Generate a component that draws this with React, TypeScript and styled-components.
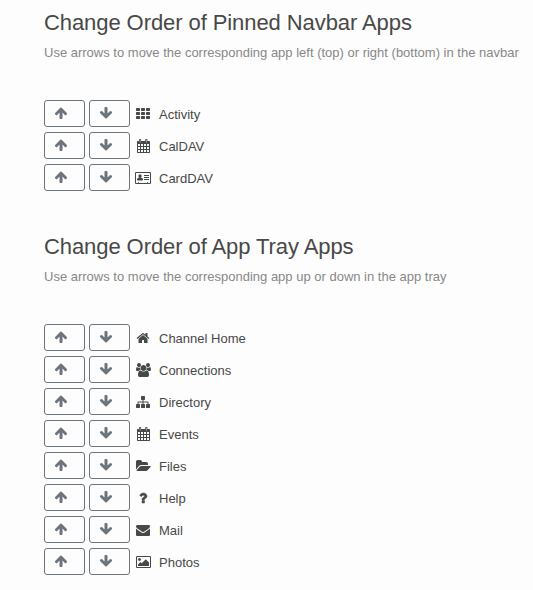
import React from "react";
import styled, { createGlobalStyle } from "styled-components";

const GlobalStyle = createGlobalStyle`
  body {
    margin: 0;
    background: #fdfdfd;
    color: #484848;
    font-family: "Liberation Sans", Arial, sans-serif;
    font-size: 13px;
    overflow: hidden;
  }
`;

const Page = styled.main`
  height: 590px;
  padding: 9px 0 0 44px;
  box-sizing: border-box;
  overflow: hidden;
`;

const Section = styled.section`
  height: 224px;
`;

const Title = styled.h2`
  margin: 0;
  font-size: 22px;
  font-weight: 400;
  line-height: 28px;
  letter-spacing: -0.08px;
  white-space: nowrap;
`;

const Description = styled.p`
  margin: 6px 0 37px;
  color: #888;
  line-height: 20px;
  white-space: nowrap;
`;

const Row = styled.div`
  display: flex;
  align-items: flex-start;
  height: 27px;
  margin-bottom: 5px;
`;

const MoveButton = styled.button`
  display: flex;
  width: 41px;
  height: 27px;
  margin: 0 4px 0 0;
  padding: 5px 0 0 9px;
  box-sizing: border-box;
  border: 1px solid #6c757d;
  border-radius: 3px;
  background: transparent;
  color: #6c757d;
`;

const IconSlot = styled.span`
  display: flex;
  justify-content: center;
  width: 18px;
  padding-top: 7px;
`;

const Label = styled.span`
  margin-left: 7px;
  line-height: 29px;
  white-space: nowrap;
`;

const Glyph = styled.svg<{ $weight: number }>`
  display: block;
  flex: none;
  height: 14px;
  fill: currentColor;
  stroke: currentColor;
  stroke-width: ${({ $weight }) => $weight};
`;

type IconShape = { width: number; d: string };

const tile = (x: number, y: number) =>
  `M${x + 512} ${y + 96}v192q0 40-28 68t-68 28h-320q-40 0-68-28t-28-68v-192q0-40 28-68t68-28h320q40 0 68 28t28 68z`;

const calendarCell = (x: number, y: number) => `M${x} ${y}h256v256h-256z`;

const icons = {
  up: {
    width: 1792,
    d: "M1675 971q0 51-37 90l-75 75q-38 38-91 38-54 0-90-38l-294-293v704q0 52-37.5 84.5t-90.5 32.5h-128q-53 0-90.5-32.5t-37.5-84.5v-704l-294 293q-36 38-90 38t-90-38l-75-75q-38-38-38-90 0-53 38-91l651-651q35-37 90-37 54 0 91 37l651 651q37 39 37 91z",
  },
  down: {
    width: 1792,
    d: "M1675 832q0 53-37 90l-651 652q-39 37-91 37-53 0-90-37l-651-652q-38-36-38-90 0-53 38-91l74-75q39-37 91-37 53 0 90 37l294 294v-704q0-52 38-90t90-38h128q52 0 90 38t38 90v704l294-294q37-37 90-37 52 0 91 37l75 75q37 39 37 91z",
  },
  grid: {
    width: 1792,
    d: [128, 640, 1152].map((y) => [0, 640, 1280].map((x) => tile(x, y)).join("")).join(""),
  },
  calendar: {
    width: 1792,
    d:
      "M228 256h156v-156q0-100 100-100h84q100 0 100 100v156h512v-156q0-100 100-100h84q100 0 100 100v156h228q100 0 100 100v1336q0 100-100 100h-1464q-100 0-100-100v-1336q0-100 100-100z" +
      "M494 110h64v350h-64zM1362 110h-64v350h64z" +
      [640, 1024, 1408]
        .map((y) => [256, 640, 1024, 1408].map((x) => calendarCell(x, y)).join(""))
        .join(""),
  },
  card: {
    width: 2048,
    d: "M160 128h1728q66 0 113 47t47 113v1216q0 66-47 113t-113 47h-1728q-66 0-113-47t-47-113v-1216q0-66 47-113t113-47zM128 256v1280h256v-96h128v96h1024v-96h128v96h256v-1280zM640 416q88 0 146 62t58 150-58 156-146 68-146-68-58-156 58-150 146-62zM448 852h384q192 0 192 236 0 128-116 128h-536q-116 0-116-128 0-236 192-236zM1152 512h640v128h-640zM1152 768h640v128h-640zM1152 1024h640v128h-640z",
  },
  home: {
    width: 1792,
    d: "M1472 992v480q0 26-19 45t-45 19h-384v-384h-256v384h-384q-26 0-45-19t-19-45v-480q0-1 .5-3t.5-3l575-474 575 474q1 2 1 6zm223-69l-62 74q-8 9-21 11h-3q-13 0-21-7l-692-577-692 577q-12 8-24 7-13-2-21-11l-62-74q-8-10-7-23.5t11-21.5l719-599q32-26 76-26t76 26l244 204v-195q0-14 9-23t23-9h192q14 0 23 9t9 23v408l219 182q10 8 11 21.5t-7 23.5z",
  },
  users: {
    width: 1920,
    d: "M593 896q-162 5-265 128h-134q-82 0-138-40.5t-56-118.5q0-353 124-353 6 0 43.5 21t97.5 42.5 119 21.5q67 0 133-23-5 37-5 66 0 139 81 256zm1071 637q0 120-73 189.5t-194 69.5h-874q-121 0-194-69.5t-73-189.5q0-53 3.5-103.5t14-109 26.5-108.5 43-97.5 62-81 85.5-53.5 111.5-20q10 0 43 21.5t73 48 107 48 135 21.5 135-21.5 107-48 73-48 43-21.5q61 0 111.5 20t85.5 53.5 62 81 43 97.5 26.5 108.5 14 109 3.5 103.5zm-1024-1277q0 106-75 181t-181 75-181-75-75-181 75-181 181-75 181 75 75 181zm704 384q0 159-112.5 271.5t-271.5 112.5-271.5-112.5-112.5-271.5 112.5-271.5 271.5-112.5 271.5 112.5 112.5 271.5zm576 225q0 78-56 118.5t-138 40.5h-134q-103-123-265-128 81-117 81-256 0-29-5-66 66 23 133 23 59 0 119-21.5t97.5-42.5 43.5-21q124 0 124 353zm-128-609q0 106-75 181t-181 75-181-75-75-181 75-181 181-75 181 75 75 181z",
  },
  sitemap: {
    width: 1792,
    d: "M1792 1248v320q0 40-28 68t-68 28h-320q-40 0-68-28t-28-68v-320q0-40 28-68t68-28h96v-192h-512v192h96q40 0 68 28t28 68v320q0 40-28 68t-68 28h-320q-40 0-68-28t-28-68v-320q0-40 28-68t68-28h96v-192h-512v192h96q40 0 68 28t28 68v320q0 40-28 68t-68 28h-320q-40 0-68-28t-28-68v-320q0-40 28-68t68-28h96v-192q0-52 38-90t90-38h512v-192h-96q-40 0-68-28t-28-68v-320q0-40 28-68t68-28h320q40 0 68 28t28 68v320q0 40-28 68t-68 28h-96v192h512q52 0 90 38t38 90v192h96q40 0 68 28t28 68z",
  },
  folder: {
    width: 1920,
    d: "M1879 952q0 31-31 66l-336 396q-43 51-120.5 86.5t-143.5 35.5h-1088q-34 0-60.5-13t-26.5-43q0-31 31-66l336-396q43-51 120.5-86.5t143.5-35.5h1088q34 0 60.5 13t26.5 43zm-343-344v160h-832q-94 0-197 47.5t-164 119.5l-337 396-5 6q0-4-.5-12.5t-.5-12.5v-960q0-92 66-158t158-66h320q92 0 158 66t66 158v32h544q92 0 158 66t66 158z",
  },
  question: {
    width: 1152,
    d: "M704 1256v240q0 16-12 28t-28 12h-240q-16 0-28-12t-12-28v-240q0-16 12-28t28-12h240q16 0 28 12t12 28zm316-600q0 54-15.5 101t-35 76.5-55 59.5-57.5 43.5-61 35.5q-41 23-68.5 65t-27.5 67q0 17-12 32.5t-28 15.5h-240q-15 0-25.5-18.5t-10.5-37.5v-45q0-83 65-156.5t143-108.5q59-27 84-56t25-76q0-42-46.5-74t-107.5-32q-65 0-108 29-35 25-107 115-13 16-31 16-12 0-25-8l-164-125q-13-10-15.5-25t5.5-28q160-266 464-266 80 0 161 31t146 83 106 127.5 41 158.5z",
  },
  envelope: {
    width: 1792,
    d: "M1792 710v794q0 66-47 113t-113 47h-1472q-66 0-113-47t-47-113v-794q44 49 101 87 362 246 497 345 57 42 92.5 65.5t94.5 48 110 24.5h2q51 0 110-24.5t94.5-48 92.5-65.5q170-123 498-345 57-39 100-87zm0-294q0 79-49 151t-122 123q-376 261-468 325-10 7-42.5 31t-54 38.5-52 32.5-57.5 27-50 9h-2q-23 0-50-9t-57.5-27-52-32.5-54-38.5-42.5-31q-91-64-262-182.5t-205-142.5q-62-42-117-115.5t-55-136.5q0-78 41.5-130t118.5-52h1472q65 0 112.5 47t47.5 113z",
  },
  picture: {
    width: 1920,
    d: "M640 576q0 80-56 136t-136 56-136-56-56-136 56-136 136-56 136 56 56 136zm1024 384v448h-1408v-192l320-320 160 160 512-512zm96-704h-1600q-13 0-22.5 9.5t-9.5 22.5v1216q0 13 9.5 22.5t22.5 9.5h1600q13 0 22.5-9.5t9.5-22.5v-1216q0-13-9.5-22.5t-22.5-9.5zm160 32v1216q0 66-47 113t-113 47h-1600q-66 0-113-47t-47-113v-1216q0-66 47-113t113-47h1600q66 0 113 47t47 113z",
  },
} satisfies Record<string, IconShape>;

type IconName = keyof typeof icons;

function Icon({ name }: { name: IconName }) {
  const { width, d } = icons[name];
  return (
    <Glyph
      $weight={name === "question" ? 70 : 0}
      viewBox={`0 0 ${width} 1792`}
      width={(width / 1792) * 14}
      height={14}
      aria-hidden
    >
      <path d={d} fillRule={name === "card" || name === "calendar" ? "evenodd" : "nonzero"} />
    </Glyph>
  );
}

type App = { icon: IconName; label: string };

const pinnedApps: App[] = [
  { icon: "grid", label: "Activity" },
  { icon: "calendar", label: "CalDAV" },
  { icon: "card", label: "CardDAV" },
];

const trayApps: App[] = [
  { icon: "home", label: "Channel Home" },
  { icon: "users", label: "Connections" },
  { icon: "sitemap", label: "Directory" },
  { icon: "calendar", label: "Events" },
  { icon: "folder", label: "Files" },
  { icon: "question", label: "Help" },
  { icon: "envelope", label: "Mail" },
  { icon: "picture", label: "Photos" },
];

function AppOrder({ title, description, apps }: { title: string; description: string; apps: App[] }) {
  return (
    <Section>
      <Title>{title}</Title>
      <Description>{description}</Description>
      {apps.map((app) => (
        <Row key={app.label}>
          <MoveButton aria-label={`Move ${app.label} up`}>
            <Icon name="up" />
          </MoveButton>
          <MoveButton aria-label={`Move ${app.label} down`}>
            <Icon name="down" />
          </MoveButton>
          <IconSlot>
            <Icon name={app.icon} />
          </IconSlot>
          <Label>{app.label}</Label>
        </Row>
      ))}
    </Section>
  );
}

export default function App() {
  return (
    <>
      <GlobalStyle />
      <Page>
        <AppOrder
          title="Change Order of Pinned Navbar Apps"
          description="Use arrows to move the corresponding app left (top) or right (bottom) in the navbar"
          apps={pinnedApps}
        />
        <AppOrder
          title="Change Order of App Tray Apps"
          description="Use arrows to move the corresponding app up or down in the app tray"
          apps={trayApps}
        />
      </Page>
    </>
  );
}
